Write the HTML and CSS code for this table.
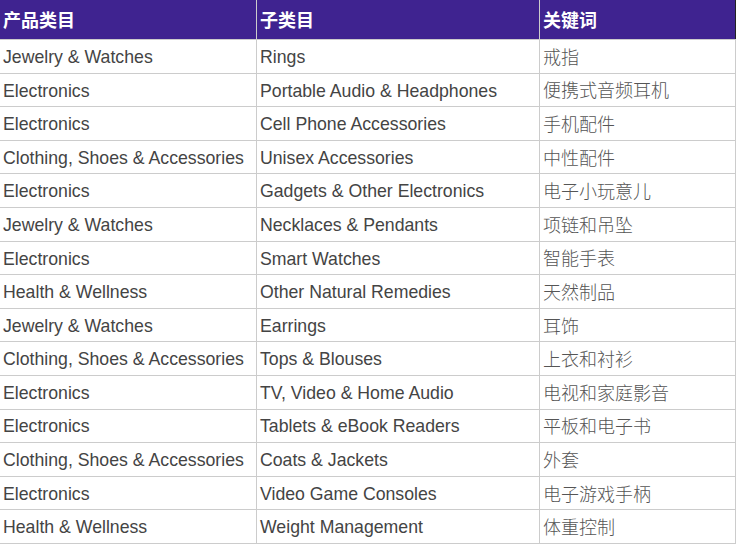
FILE: index.html
```html
<!DOCTYPE html>
<html lang="zh">
<head>
<meta charset="utf-8">
<link rel="stylesheet" href="styles.css">
</head>
<body>
<table class="tbl">
  <thead>
    <tr><th class="c1">产品类目</th><th class="c2">子类目</th><th class="c3">关键词</th></tr>
  </thead>
  <tbody>
    <tr><td>Jewelry &amp; Watches</td><td>Rings</td><td class="zh">戒指</td></tr>
    <tr><td>Electronics</td><td>Portable Audio &amp; Headphones</td><td class="zh">便携式音频耳机</td></tr>
    <tr><td>Electronics</td><td>Cell Phone Accessories</td><td class="zh">手机配件</td></tr>
    <tr><td>Clothing, Shoes &amp; Accessories</td><td>Unisex Accessories</td><td class="zh">中性配件</td></tr>
    <tr><td>Electronics</td><td>Gadgets &amp; Other Electronics</td><td class="zh">电子小玩意儿</td></tr>
    <tr><td>Jewelry &amp; Watches</td><td>Necklaces &amp; Pendants</td><td class="zh">项链和吊坠</td></tr>
    <tr><td>Electronics</td><td>Smart Watches</td><td class="zh">智能手表</td></tr>
    <tr><td>Health &amp; Wellness</td><td>Other Natural Remedies</td><td class="zh">天然制品</td></tr>
    <tr><td>Jewelry &amp; Watches</td><td>Earrings</td><td class="zh">耳饰</td></tr>
    <tr><td>Clothing, Shoes &amp; Accessories</td><td>Tops &amp; Blouses</td><td class="zh">上衣和衬衫</td></tr>
    <tr><td>Electronics</td><td>TV, Video &amp; Home Audio</td><td class="zh">电视和家庭影音</td></tr>
    <tr><td>Electronics</td><td>Tablets &amp; eBook Readers</td><td class="zh">平板和电子书</td></tr>
    <tr><td>Clothing, Shoes &amp; Accessories</td><td>Coats &amp; Jackets</td><td class="zh">外套</td></tr>
    <tr><td>Electronics</td><td>Video Game Consoles</td><td class="zh">电子游戏手柄</td></tr>
    <tr><td>Health &amp; Wellness</td><td>Weight Management</td><td class="zh">体重控制</td></tr>
  </tbody>
</table>
</body>
</html>
```
FILE: styles.css
```css
html, body {
  margin: 0;
  padding: 0;
  background: #fff;
}
.tbl {
  border-collapse: collapse;
  table-layout: fixed;
  width: 737px;
  margin-left: -1px;
  font-family: "Liberation Sans", Arial, "Noto Sans CJK SC", sans-serif;
  font-size: 17.7px;
  color: #444;
}
.tbl th {
  background: #3f2390;
  color: #fff;
  font-family: "Noto Sans CJK SC", sans-serif;
  font-weight: 700;
  font-size: 18px;
  text-align: left;
  height: 38px;
  padding: 0 0 1px 3px;
  border: 1px solid #ccc;
  border-top: 0;
  line-height: 1;
}
.tbl th.c3 {
  border-right: 1px solid #222;
}
.tbl .c1 { width: 253px; }
.tbl .c2 { width: 279px; }
.tbl td {
  height: 29.6px;
  padding: 3px 0 0 3px;
  border: 1px solid #ccc;
  white-space: nowrap;
  line-height: 1;
}
.tbl td.zh {
  padding: 0 0 1px 3px;
  height: 31.6px;
  font-family: "Noto Sans CJK SC", sans-serif;
  font-weight: 300;
  font-size: 18px;
  color: #555;
}
```
